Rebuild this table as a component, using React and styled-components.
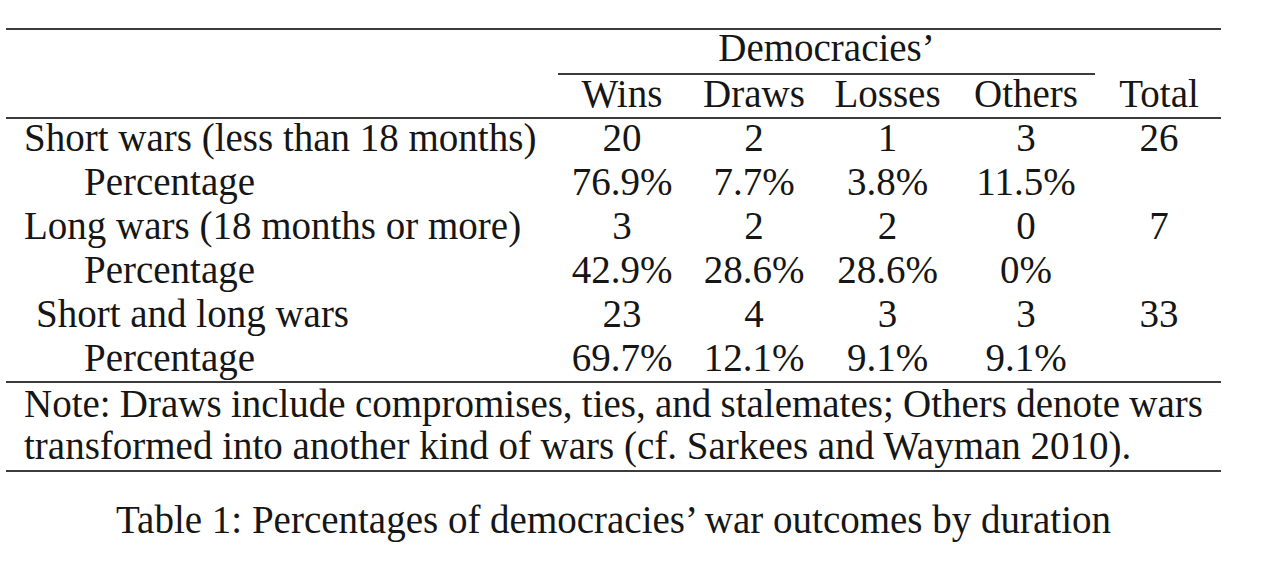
import styled, { createGlobalStyle } from "styled-components";

const GlobalStyle = createGlobalStyle`
  html, body {
    margin: 0;
    padding: 0;
    background: #ffffff;
  }
  body {
    font-family: "Liberation Serif", "Times New Roman", serif;
    color: #161616;
  }
`;

const Page = styled.div`
  width: 1280px;
  height: 563px;
  padding: 28px 0 0 6px;
  box-sizing: border-box;
  overflow: hidden;
`;

const Table = styled.div`
  display: grid;
  grid-template-columns: 550px 132px 132px 135px 142px 124px;
  width: 1215px;
  font-size: 39px;
`;

const Rule = styled.div`
  grid-column: ${(p) => p.$span || "1 / -1"};
  height: 2px;
  background: #3c3c3c;
  margin: 0 ${(p) => (p.$trim ? "2px" : "0")};
`;

const Cell = styled.div`
  grid-column: ${(p) => p.$span || "auto"};
  height: ${(p) => p.$h || 44}px;
  line-height: ${(p) => p.$lh || 38}px;
  text-align: center;
  white-space: nowrap;
`;

const Label = styled(Cell)`
  grid-column: 1;
  text-align: left;
  padding-left: ${(p) => p.$indent || 18}px;
`;

const Note = styled.div`
  grid-column: 1 / -1;
  padding: 0 18px;
`;

const NoteLine = styled.div`
  height: ${(p) => p.$h || 42}px;
  line-height: 42px;
  white-space: nowrap;
  word-spacing: ${(p) => (p.$justify ? "-1px" : "0")};
  text-align: ${(p) => (p.$justify ? "justify" : "left")};
  text-align-last: ${(p) => (p.$justify ? "justify" : "left")};
`;

const Caption = styled.div`
  width: 1215px;
  margin-top: 27px;
  line-height: 42px;
  font-size: 39px;
  text-align: center;
`;

const rows = [
  { label: "Short wars (less than 18 months)", indent: 18, vals: ["20", "2", "1", "3", "26"] },
  { label: "Percentage", indent: 78, vals: ["76.9%", "7.7%", "3.8%", "11.5%", ""] },
  { label: "Long wars (18 months or more)", indent: 18, vals: ["3", "2", "2", "0", "7"] },
  { label: "Percentage", indent: 78, vals: ["42.9%", "28.6%", "28.6%", "0%", ""] },
  { label: "Short and long wars", indent: 30, vals: ["23", "4", "3", "3", "33"] },
  { label: "Percentage", indent: 78, vals: ["69.7%", "12.1%", "9.1%", "9.1%", ""], h: 42 },
];

const heads = ["Wins", "Draws", "Losses", "Others", "Total"];

export default function App() {
  return (
    <Page>
      <GlobalStyle />
      <Table>
        <Rule />

        <Cell $span="1" $h={43} $lh={36} />
        <Cell $span="2 / 6" $h={43} $lh={36}>
          Democracies’
        </Cell>
        <Cell $span="6" $h={43} />

        <Rule $span="2 / 6" $trim />

        <Cell $span="1" $h={42} />
        {heads.map((h) => (
          <Cell key={h} $h={42}>
            {h}
          </Cell>
        ))}

        <Rule />

        {rows.map((r, i) => [
          <Label key={`l${i}`} $indent={r.indent} $h={r.h}>
            {r.label}
          </Label>,
          ...r.vals.map((v, j) => (
            <Cell key={`c${i}-${j}`} $h={r.h}>
              {v}
            </Cell>
          )),
        ])}

        <Rule />

        <Note>
          <NoteLine $justify>
            Note: Draws include compromises, ties, and stalemates; Others denote wars
          </NoteLine>
          <NoteLine $h={45}>
            transformed into another kind of wars (cf. Sarkees and Wayman 2010).
          </NoteLine>
        </Note>

        <Rule />
      </Table>
      <Caption>Table 1: Percentages of democracies’ war outcomes by duration</Caption>
    </Page>
  );
}
